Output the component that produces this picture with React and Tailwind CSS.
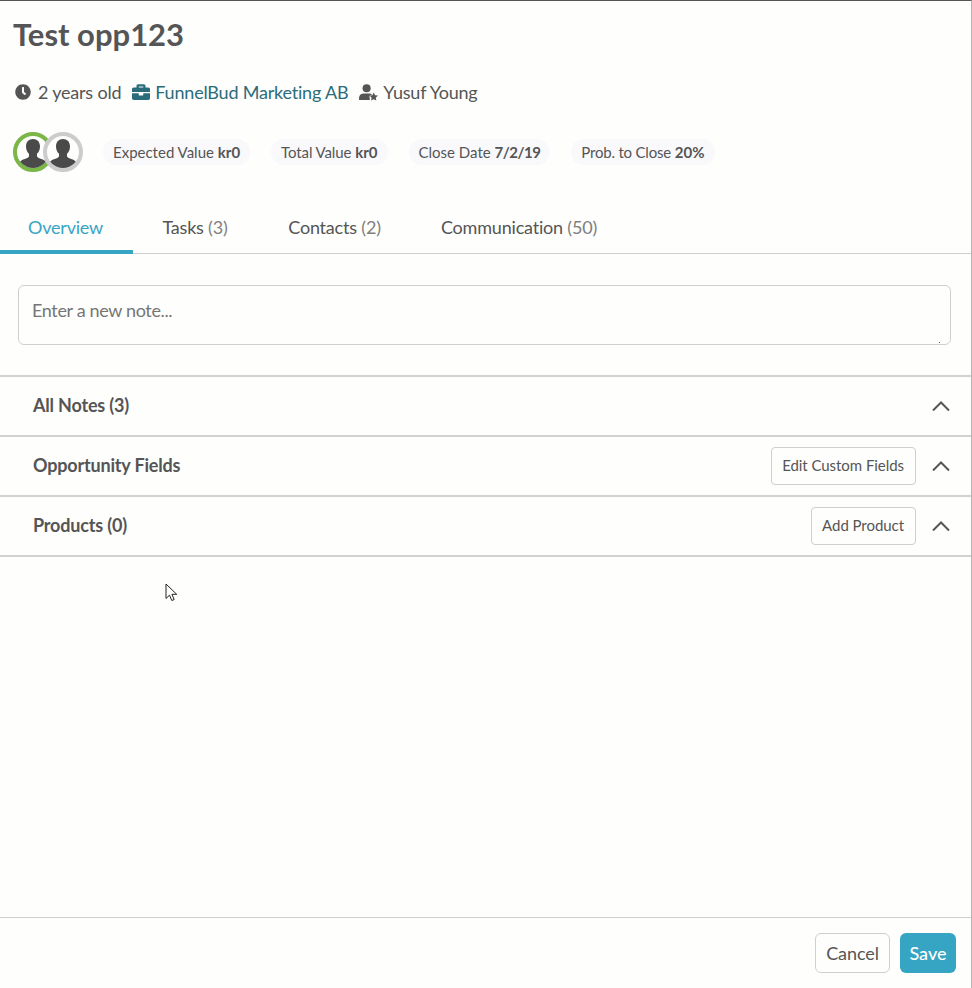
import React from "react";
import { FaClock, FaBriefcase } from "react-icons/fa";

function Avatar({ ring, className }) {
  return (
    <div className={`w-10 h-10 rounded-full border-[4px] ${ring} bg-[#fefefd] overflow-hidden flex items-end justify-center ${className}`}>
      <svg viewBox="0 0 32 32" className="w-8 h-8 text-[#4a4a4a]" fill="currentColor">
        <path d="M16 3c-4.200 0-7 3-7 7.400 0 3 1.300 5.700 3 7.300v2.300c0 1-1 1.700-3 2.500-3 1.100-6 2-7 5.500v4.500h28v-4.500c-1-3.500-4-4.400-7-5.500-2-.8-3-1.500-3-2.500v-2.300c1.700-1.600 3-4.300 3-7.300C23 6 20.200 3 16 3z" />
      </svg>
    </div>
  );
}

function Pill({ label, value, labelClass = "", valueClass = "" }) {
  return (
    <div className="h-[26px] px-2.5 rounded-full bg-[#f9f9fc] flex items-center text-[15px] text-[#555] whitespace-nowrap">
      <span className={labelClass}>{label}</span>&nbsp;<b className={`font-bold ${valueClass}`}>{value}</b>
    </div>
  );
}

function Chevron() {
  return (
    <svg viewBox="0 0 18 10" className="w-[18px] h-2.5 text-[#555]" fill="none" stroke="currentColor" strokeWidth="2">
      <path d="M1 9.500L9 1.500l8 8" />
    </svg>
  );
}

function Section({ title, action }) {
  return (
    <div className="h-[60px] border-b-2 border-[#d2d2d0] pl-[33px] pr-[21px] flex items-center">
      <h3 className="-mt-0.5 text-lg font-bold text-[#555] tracking-[-0.18px]">{title}</h3>
      {action && (
        <button className="ml-auto h-[38px] pl-2.5 pr-[11px] pb-0.5 border border-[#cfcfcf] rounded text-[15px] tracking-[-0.05px] text-[#555]">{action}</button>
      )}
      <div className={action ? "ml-4" : "ml-auto"}>
        <Chevron />
      </div>
    </div>
  );
}

const tabs = [
  { name: "Overview", active: true, w: "w-[133px]" },
  { name: "Tasks", count: "(3)", w: "w-[126px]" },
  { name: "Contacts", count: "(2)", w: "w-[153px]" },
  { name: "Communication", count: "(50)", w: "w-[216px]" },
];

export default function App() {
  return (
    <div className="relative w-[972px] h-[988px] flex flex-col bg-[#fefefd] border-t border-t-[#555] border-r border-r-[#b5b5b5] font-['Lato','Noto_Sans',sans-serif] text-[#555] overflow-hidden">
      <div className="h-[201px] shrink-0 px-[13px]">
        <h1 className="mt-[15px] text-[31px] leading-9 font-bold">Test opp123</h1>
        <div className="mt-[26px] h-7 flex items-center text-lg tracking-[-0.2px]">
          <FaClock className="ml-[2px] w-4 h-4 text-[#555]" />
          <span className="ml-[7px]">2 years old</span>
          <FaBriefcase className="ml-[11px] w-[18px] h-[18px] text-[#2b6c7b]" />
          <a className="ml-[5px] text-[#2b6c7b]">FunnelBud Marketing AB</a>
          <svg viewBox="0 0 20 18" className="ml-[11px] w-[19px] h-[17px] text-[#555]" fill="currentColor">
            <circle cx="8" cy="4.500" r="4.300" />
            <path d="M0 17v-2.500C0 11.500 2.500 10 5 10h6c1 0 2 .3 2.700 1L11 12.500 11.500 17z" />
            <path d="M15.500 9l1.400 2.900 3.100.4-2.300 2.200.6 3.100-2.800-1.500-2.800 1.500.6-3.100-2.300-2.200 3.100-.4z" />
          </svg>
          <span className="ml-[5px]">Yusuf Young</span>
        </div>
        <div className="mt-[26px] flex items-center">
          <Avatar ring="border-[#7ab648]" />
          <Avatar ring="border-[#cccccc]" className="-ml-[10px] relative" />
          <div className="ml-5 flex items-center gap-[21px]">
            <Pill label="Expected Value" value="kr0" />
            <Pill label="Total Value" value="kr0" labelClass="tracking-[-0.1px]" />
            <Pill label="Close Date" value="7/2/19" valueClass="tracking-[-0.5px]" />
            <Pill label="Prob. to Close" value="20%" labelClass="tracking-[-0.2px]" />
          </div>
        </div>
      </div>

      <div className="h-[52px] shrink-0 flex border-b border-[#cfcfcf]">
        {tabs.map((t) => (
          <div
            key={t.name}
            className={`${t.w} h-[52px] pt-[11px] pr-0.5 text-lg tracking-[-0.2px] text-center whitespace-nowrap ${t.active ? "border-b-4 border-[#36a5c4] text-[#36a5c4]" : ""}`}
          >
            {t.name}
            {t.count && <span className="text-[#808080]"> {t.count}</span>}
          </div>
        ))}
      </div>

      <div className="h-[123px] shrink-0 border-b-2 border-[#d2d2d0] px-[18px] pt-[31px]">
        <div className="relative w-[933px] h-[60px]">
          <textarea
            className="block w-full h-full px-[13px] py-2.5 border border-[#cfcfcf] rounded-md text-lg tracking-[-0.35px] bg-transparent placeholder:text-[#757575] outline-none resize-none"
            placeholder="Enter a new note..."
          />
          <span className="absolute right-[11px] bottom-[2px] w-px h-px bg-[#666]" />
        </div>
      </div>

      <Section title="All Notes (3)" />
      <Section title="Opportunity Fields" action="Edit Custom Fields" />
      <Section title="Products (0)" action="Add Product" />

      <div className="flex-1" />

      <div className="h-[71px] shrink-0 border-t border-[#cfcfcf] flex items-start justify-end gap-2.5 pt-[15px] pr-[15px]">
        <button className="h-10 w-[75px] border border-[#cfcfcf] rounded-md text-lg tracking-[-0.1px] text-[#555]">Cancel</button>
        <button className="h-10 w-14 rounded-md bg-[#36a5c4] text-lg font-medium text-white">Save</button>
      </div>

      <svg viewBox="0 0 14 20" className="absolute left-[165px] top-[582px] w-3.5 h-5" fill="#fff" stroke="#222" strokeWidth="1">
        <path d="M1 1v14.500l3.500-3.300 2.300 5.300 2.400-1-2.300-5.200h4.800z" />
      </svg>
    </div>
  );
}
